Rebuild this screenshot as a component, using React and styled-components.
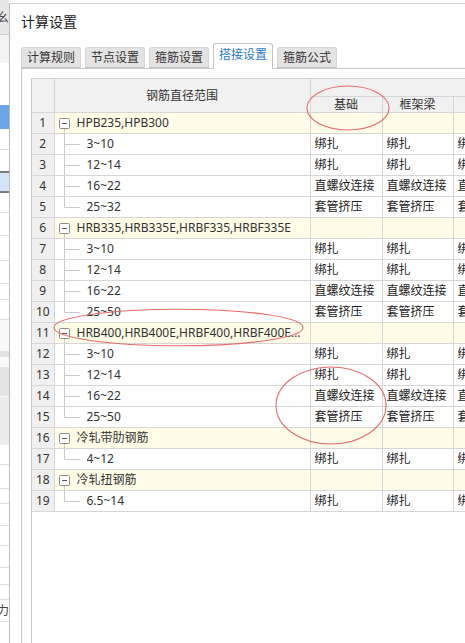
import styled, { createGlobalStyle } from "styled-components"

const GlobalStyle = createGlobalStyle`
  html, body {
    margin: 0;
    padding: 0;
    overflow: hidden;
    background: #fff;
  }
  body {
    font-family: "Noto Sans", "Noto Sans CJK SC", sans-serif;
    font-size: 12px;
    color: #333;
  }
`

const backdrop = [
  { h: 35, bg: "#e7e7e7", line: "#cfcfcf", text: "幺" },
  { h: 28, bg: "#f3f3f3" },
  { h: 42, bg: "#fff" },
  { h: 24, bg: "#6ca6e6" },
  { h: 21, bg: "#fff", line: "#dcdcdc" },
  { h: 21, bg: "#fff" },
  { h: 2, bg: "#7a7a7a" },
  { h: 18, bg: "#d2e4f7" },
  { h: 2, bg: "#7a7a7a" },
  { h: 20, bg: "#fff", line: "#dedede" },
  { h: 23, bg: "#fff", line: "#dedede" },
  { h: 25, bg: "#fff", line: "#dedede" },
  { h: 23, bg: "#fff", line: "#dedede" },
  { h: 16, bg: "#fff", line: "#dedede" },
  { h: 20, bg: "#fff", line: "#dedede" },
  { h: 31, bg: "#f9f9f9" },
  { h: 6, bg: "#e2e2e2" },
  { h: 10, bg: "#fafafa" },
  { h: 30, bg: "#e5e5e7", line: "#fafafa" },
  { h: 48, bg: "#ececec" },
  { h: 20, bg: "#fff", line: "#dedede" },
  { h: 24, bg: "#fff", line: "#dedede" },
  { h: 15, bg: "#fff", line: "#dedede" },
  { h: 22, bg: "#fff", line: "#dedede" },
  { h: 20, bg: "#fff", line: "#dedede" },
  { h: 22, bg: "#fff", line: "#dedede" },
  { h: 17, bg: "#fff", line: "#dedede" },
  { h: 15, bg: "#fff", line: "#dedede" },
  { h: 22, bg: "#fff", line: "#dedede", text: "力" },
  { h: 40, bg: "#fff" },
]

const child = (label, v, last) => ({ type: "child", label, v, last })
const group = (label) => ({ type: "group", label })

const rows = [
  group("HPB235,HPB300"),
  child("3~10", "绑扎"),
  child("12~14", "绑扎"),
  child("16~22", "直螺纹连接"),
  child("25~32", "套管挤压", true),
  group("HRB335,HRB335E,HRBF335,HRBF335E"),
  child("3~10", "绑扎"),
  child("12~14", "绑扎"),
  child("16~22", "直螺纹连接"),
  child("25~50", "套管挤压", true),
  group("HRB400,HRB400E,HRBF400,HRBF400E,RRB400"),
  child("3~10", "绑扎"),
  child("12~14", "绑扎"),
  child("16~22", "直螺纹连接"),
  child("25~50", "套管挤压", true),
  group("冷轧带肋钢筋"),
  child("4~12", "绑扎", true),
  group("冷轧扭钢筋"),
  child("6.5~14", "绑扎", true),
]

const tabs = ["计算规则", "节点设置", "箍筋设置", "搭接设置", "箍筋公式"]

function Expander() {
  return (
    <svg width="11" height="21" viewBox="0 0 11 21">
      <rect x="0.5" y="5.5" width="10" height="10" rx="1" fill="#fff" stroke="#8a8a8a" />
      <line x1="3" y1="10.5" x2="8" y2="10.5" stroke="#555" />
      <line x1="5.5" y1="16" x2="5.5" y2="21" stroke="#c9c9c9" />
    </svg>
  )
}

function Branch({ last }) {
  return (
    <svg width="24" height="21" viewBox="0 0 24 21">
      <line x1="5.5" y1="0" x2="5.5" y2={last ? 10.5 : 21} stroke="#c9c9c9" />
      <line x1="5.5" y1="10.5" x2="21" y2="10.5" stroke="#c9c9c9" />
    </svg>
  )
}

function App() {
  return (
    <Screen>
      <GlobalStyle />
      <Backdrop>
        {backdrop.map((b, i) => (
          <BgRow key={i} $h={b.h} $bg={b.bg} $line={b.line}>
            {b.text}
          </BgRow>
        ))}
      </Backdrop>

      <Dialog>
        <Title>计算设置</Title>
        <TabBar>
          {tabs.map((t) => (
            <Tab key={t} $active={t === "搭接设置"}>
              {t}
            </Tab>
          ))}
        </TabBar>
        <Panel>
          <Grid>
            <Table>
              <colgroup>
                <col style={{ width: 22 }} />
                <col style={{ width: 256 }} />
                <col style={{ width: 72 }} />
                <col style={{ width: 71 }} />
                <col style={{ width: 72 }} />
              </colgroup>
              <thead>
                <tr>
                  <HeadCell rowSpan={2} />
                  <HeadCell rowSpan={2}>钢筋直径范围</HeadCell>
                  <HeadCell colSpan={3} $h={17} />
                </tr>
                <tr>
                  <HeadCell $h={15}>基础</HeadCell>
                  <HeadCell $h={15}>框架梁</HeadCell>
                  <HeadCell $h={15}>框架柱</HeadCell>
                </tr>
              </thead>
              <tbody>
                {rows.map((r, i) => {
                  const isGroup = r.type === "group"
                  return (
                    <tr key={i}>
                      <NumCell>{i + 1}</NumCell>
                      <Cell $group={isGroup}>
                        <TreeLine>
                          {isGroup ? <Expander /> : <Branch last={r.last} />}
                          <Label $group={isGroup}>{r.label}</Label>
                        </TreeLine>
                      </Cell>
                      <Cell $group={isGroup}>{r.v}</Cell>
                      <Cell $group={isGroup}>{r.v}</Cell>
                      <Cell $group={isGroup}>{r.v}</Cell>
                    </tr>
                  )
                })}
              </tbody>
            </Table>
          </Grid>
        </Panel>
      </Dialog>

      <Marks viewBox="0 0 465 643">
        <ellipse cx="348" cy="108" rx="41" ry="22" />
        <ellipse cx="178.5" cy="327.5" rx="124.5" ry="18.3" />
        <ellipse cx="331" cy="405.5" rx="55" ry="38.5" />
      </Marks>
    </Screen>
  )
}

export default App

const Screen = styled.div`
  position: relative;
  display: flex;
  width: 100vw;
  height: 100vh;
  overflow: hidden;
  background: #fff;
`

const Backdrop = styled.div`
  width: 9px;
  flex-shrink: 0;
  display: flex;
  flex-direction: column;
  overflow: hidden;
`

const BgRow = styled.div`
  flex-shrink: 0;
  height: ${(p) => p.$h}px;
  box-sizing: border-box;
  background: ${(p) => p.$bg};
  border-bottom: ${(p) => (p.$line ? `1px solid ${p.$line}` : "none")};
  font-size: 12px;
  line-height: ${(p) => p.$h}px;
  text-indent: -3px;
  white-space: nowrap;
  color: #444;
`

const Dialog = styled.div`
  flex: 1;
  min-width: 0;
  margin-top: 3px;
  display: flex;
  flex-direction: column;
  border-left: 1px solid #bcbcbc;
  border-top: 1px solid #d4d4d4;
  padding-left: 11px;
  background: #fff;
`

const Title = styled.div`
  height: 39px;
  box-sizing: border-box;
  padding-top: 8px;
  font-size: 14px;
  line-height: 20px;
  color: #222;
`

const TabBar = styled.div`
  display: flex;
  align-items: flex-end;
  gap: 4px;
  height: 25px;
  position: relative;
  z-index: 1;
`

const Tab = styled.div`
  box-sizing: border-box;
  height: ${(p) => (p.$active ? 26 : 21)}px;
  margin-bottom: ${(p) => (p.$active ? -1 : 0)}px;
  padding: 0 5px;
  border: 1px solid ${(p) => (p.$active ? "#c4c4c4" : "#d6d6d6")};
  border-bottom: ${(p) => (p.$active ? "none" : "1px solid #c4c4c4")};
  border-radius: 3px 3px 0 0;
  background: ${(p) => (p.$active ? "#fff" : "#e3e3e3")};
  color: ${(p) => (p.$active ? "#2a7ad6" : "#333")};
  font-size: 12px;
  line-height: ${(p) => (p.$active ? 22 : 19)}px;
  white-space: nowrap;
`

const Panel = styled.div`
  flex: 1;
  display: flex;
  flex-direction: column;
  border-left: 1px solid #c8c8c8;
  border-top: 1px solid #c8c8c8;
  padding: 9px 0 0 9px;
  min-height: 0;
`

const Grid = styled.div`
  flex: 1;
  border-left: 1px solid #c6c6c6;
  border-top: 1px solid #d0d0d0;
  overflow: hidden;
  background: #fff;
`

const Table = styled.table`
  table-layout: fixed;
  border-collapse: collapse;
  width: 493px;
`

const HeadCell = styled.th`
  height: ${(p) => (p.$h ? `${p.$h}px` : "auto")};
  padding: 0;
  background: #f1f1f1;
  border-right: 1px solid #d6d6d6;
  border-bottom: 1px solid #d6d6d6;
  font-weight: normal;
  font-size: 12px;
  line-height: 14px;
  color: #333;
  text-align: center;
  white-space: nowrap;
  overflow: hidden;
`

const NumCell = styled.td`
  height: 20px;
  padding: 0;
  background: #f0f0f0;
  border-right: 1px solid #d6d6d6;
  border-bottom: 1px solid #d6d6d6;
  text-align: center;
  font-size: 12px;
  line-height: 20px;
  color: #333;
`

const Cell = styled.td`
  height: 20px;
  padding: 0 0 0 4px;
  background: ${(p) => (p.$group ? "#fffce8" : "#fff")};
  border-right: 1px solid #d6d6d6;
  border-bottom: 1px solid #d6d6d6;
  font-size: 12px;
  line-height: 20px;
  color: #222;
  white-space: nowrap;
  overflow: hidden;
`

const TreeLine = styled.div`
  display: flex;
  align-items: center;
  height: 20px;
  min-width: 0;
  svg {
    flex-shrink: 0;
    margin-top: 1px;
  }
`

const Label = styled.span`
  flex: 1;
  min-width: 0;
  margin-left: ${(p) => (p.$group ? 7 : 4)}px;
  padding-right: 8px;
  overflow: hidden;
  text-overflow: ellipsis;
  white-space: nowrap;
  color: #333;
`

const Marks = styled.svg`
  position: absolute;
  left: 0;
  top: 0;
  width: 465px;
  height: 643px;
  pointer-events: none;
  fill: none;
  stroke: #e86a6a;
  stroke-width: 1.1;
`
